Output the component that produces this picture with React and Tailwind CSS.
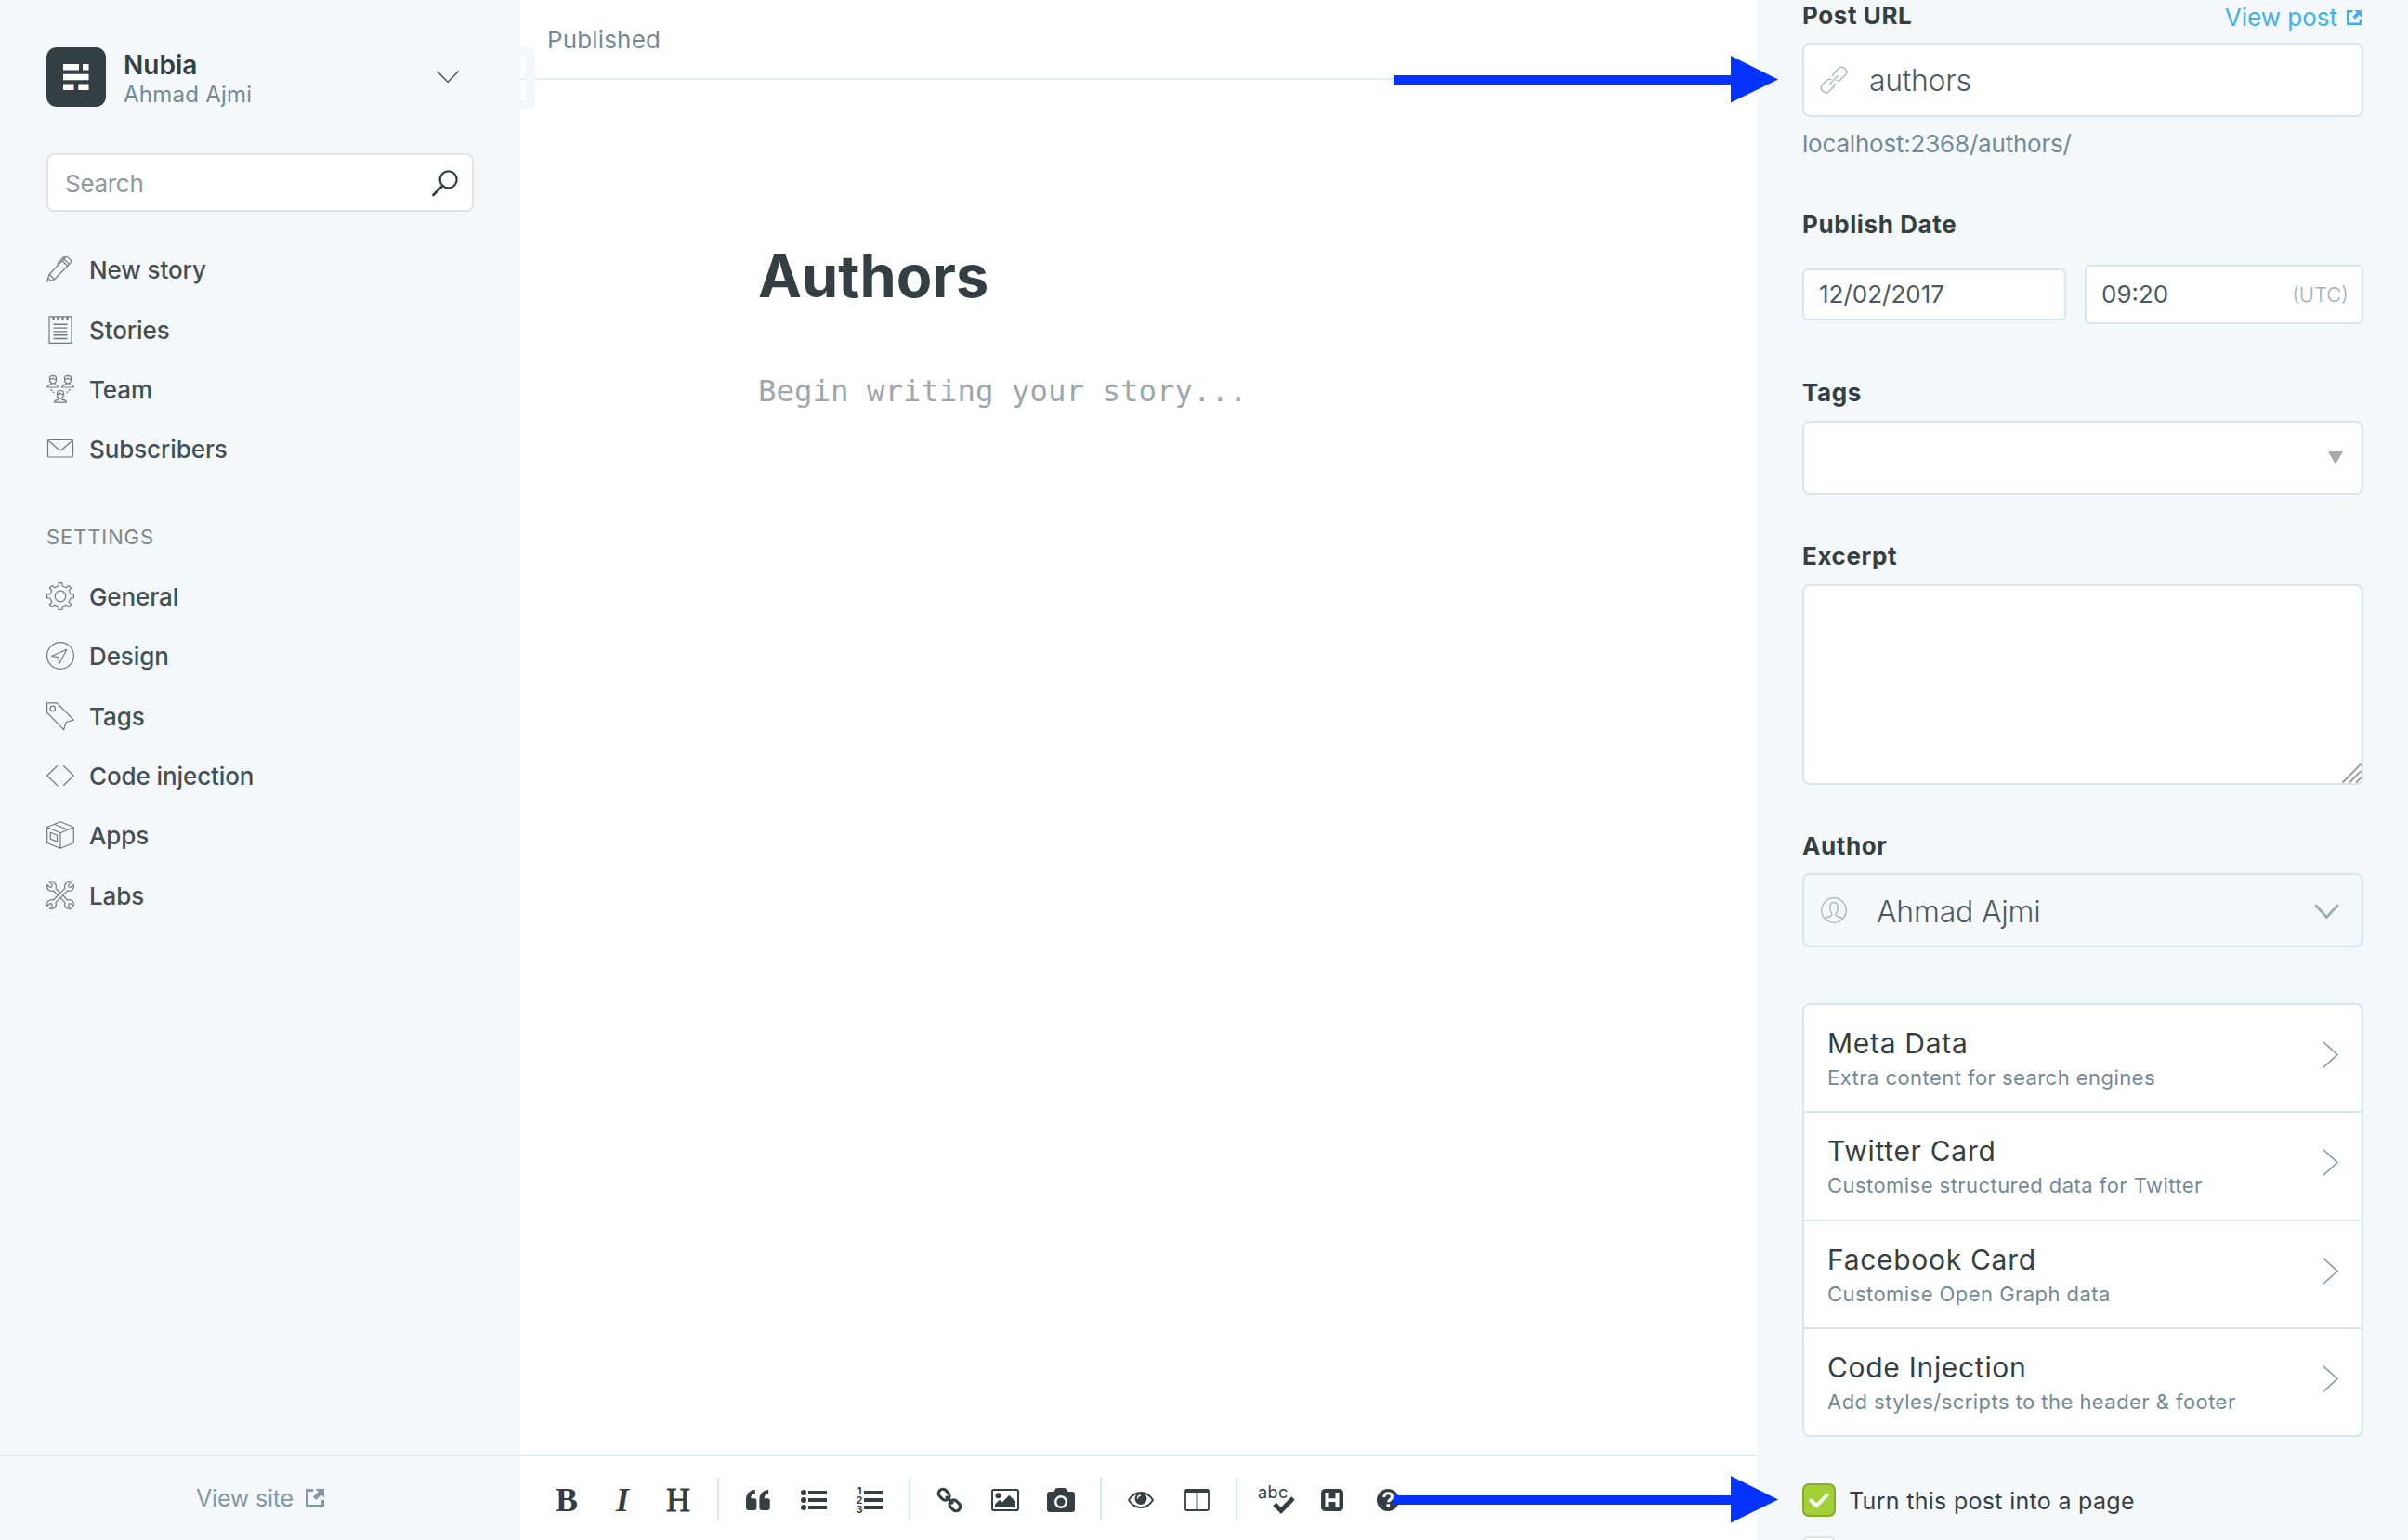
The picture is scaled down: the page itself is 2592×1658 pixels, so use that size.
import React from "react";

const Svg = ({ w = 30, h = 30, vb, className = "", children, sw = 1.2, stroke = "currentColor", fill = "none" }) => (
  <svg width={w} height={h} viewBox={vb || `0 0 ${w} ${h}`} fill={fill} stroke={stroke} strokeWidth={sw} className={"shrink-0 overflow-visible " + className}>
    {children}
  </svg>
);

/* ---------- sidebar icons ---------- */

const PenIcon = () => (
  <Svg>
    <path d="M.6 28.2 3 20.3 18.8 3.9l5.7 5.5L8.6 25.7z" />
    <path d="M3 20.3l5.6 5.4M2 24.4l2.4 2.4M16.9 5.8l5.7 5.5M18.8 3.9l2-2q1-.9 2.2 0l3.2 3.2q1 1.2 0 2.2l-1.7 2.1M20.3 2.4 18.7 1.6 11.5 9.4" />
  </Svg>
);
const NotebookIcon = () => (
  <Svg>
    <path d="M3 .8h24v28.6H3z" />
    <path d="M7.5 1v3.4M12.5 1v3.4M17.5 1v3.4M22.5 1v3.4" strokeWidth="2.2" />
    <path d="M7.5 9.3h15M7.5 13.1h15M7.5 16.9h15M7.5 20.7h15M7.5 24.5h15" strokeWidth="1.4" />
  </Svg>
);
const Bust = ({ x, y }) => (
  <g transform={`translate(${x} ${y})`}>
    <path d="M-3.6 3.6c0-2 1.4-3.1 3.6-3.1s3.6 1.1 3.6 3.1c0 3-1.3 5.4-3.6 5.4S-3.6 6.6-3.6 3.6z" />
    <path d="M-3.6 4.2q2.2.6 3.6-.9q1.4 1.5 3.6.9M-1.8 8.5v1.7q-4.6.7-4.6 3H6.4q0-2.3-4.6-3V8.5" />
  </g>
);
const TeamIcon = () => (
  <Svg>
    <Bust x={7} y={-0.2} />
    <Bust x={23} y={-0.2} />
    <Bust x={15} y={16} />
    <path d="M4.5 15l3.8 4.2M25.5 15l-3.8 4.2" strokeDasharray="2.6 1" />
  </Svg>
);
const MailIcon = () => (
  <Svg>
    <rect x="1.5" y="5.5" width="27" height="18.5" rx="1.5" />
    <path d="M2 6.2l11.6 10q1.4 1.1 2.8 0L28 6.2" />
  </Svg>
);
const gearPath = (() => {
  const pts = [];
  for (let k = 0; k < 8; k++) {
    const a = (k * Math.PI) / 4;
    [[-4, 10.2], [-2, 11], [-2, 14.4], [2, 14.4], [2, 11], [4, 10.2]].forEach(([t, r]) => {
      pts.push(`${(15 + r * Math.cos(a) - t * Math.sin(a)).toFixed(2)} ${(15 + r * Math.sin(a) + t * Math.cos(a)).toFixed(2)}`);
    });
  }
  return "M" + pts.join("L") + "Z";
})();
const GearIcon = () => (
  <Svg>
    <path d={gearPath} strokeLinejoin="round" />
    <circle cx="15" cy="15" r="5.8" />
  </Svg>
);
const DesignIcon = () => (
  <Svg>
    <circle cx="15" cy="15" r="14.4" />
    <path d="M21.8 8.3 5.6 15.5l7.3 1.2.7 7.3z" strokeLinejoin="round" />
  </Svg>
);
const TagIcon = () => (
  <Svg>
    <path d="M.6.8h10.6l18.2 18.3-8.3 2.3-2.5 8.2L.6 11.2z" />
    <circle cx="6.8" cy="6.9" r="2.7" />
  </Svg>
);
const CodeIcon = () => (
  <Svg>
    <path d="M11.8 4.2.8 15l11 10.8M18.2 4.2 29.2 15l-11 10.8" />
  </Svg>
);
const BoxIcon = () => (
  <Svg>
    <path d="M15 .7l14.3 5.8v17L15 29.3.7 23.5v-17zM.7 6.5 15 12.7l14.3-6.2M15 12.7v16.6M8.6 3.3l14.2 6M4.3 12.3l7.2 3v6.8l-7.2-3z" strokeLinejoin="round" />
  </Svg>
);
const wrench =
  "M2 9.6V-9.6A5.3 5.3 0 0 0 1.9-19.4V-15.3L0-13.8L-1.9-15.3V-19.4A5.3 5.3 0 0 0-2-9.6V9.6A5.3 5.3 0 0 0-1.9 19.4V15.3L0 13.8L1.9 15.3V19.4A5.3 5.3 0 0 0 2 9.6Z";
const LabsIcon = () => (
  <Svg>
    <g transform="translate(15 15) scale(.93)">
      <path d={wrench} transform="rotate(-45)" />
      <path d={wrench} transform="rotate(45)" fill="#f4f8fb" />
    </g>
  </Svg>
);

/* ---------- shared icons ---------- */

const ExternalIcon = ({ size, className }) => (
  <Svg w={size} h={size} vb="0 0 20 20" sw={0} fill="currentColor" className={className}>
    <path d="M0 0h8v3H3v14h14v-5h3v8H0zM10.5 0H20v9.5l-3.2-3.2-5.6 5.8-3.3-3.3 5.7-5.7z" />
  </Svg>
);

/* ---------- toolbar icons ---------- */

const QuoteIcon = () => (
  <Svg w={26} h={22} sw={0} fill="currentColor">
    <path d="M9.8 0v4C7 4.4 5.4 6 5.2 9.2H9q2.4 0 2.4 2.4v8Q11.4 22 9 22H2.4Q0 22 0 19.6V11C0 4.5 3.5.3 9.8 0zM24.2 0v4c-2.8.4-4.4 2-4.6 5.2h3.8q2.4 0 2.4 2.4v8q0 2.4-2.4 2.4h-6.6q-2.4 0-2.4-2.4V11C14.4 4.5 17.9.3 24.2 0z" />
  </Svg>
);
const ListIcon = () => (
  <Svg w={28} h={22} sw={0} fill="currentColor">
    <circle cx="3" cy="3" r="3" />
    <circle cx="3" cy="11" r="3" />
    <circle cx="3" cy="19" r="3" />
    <path d="M8 1h20v4H8zM8 9h20v4H8zM8 17h20v4H8z" />
  </Svg>
);
const OrderedIcon = () => (
  <div className="flex items-center gap-[2px]">
    <div className="flex w-[6px] flex-col items-center text-[11px] font-bold leading-[10px]">
      <span>1</span>
      <span>2</span>
      <span>3</span>
    </div>
    <Svg w={20} h={22} sw={0} fill="currentColor">
      <path d="M0 1h20v4H0zM0 9h20v4H0zM0 17h20v4H0z" />
    </Svg>
  </div>
);
const ChainIcon = () => (
  <Svg w={26} h={26} sw={3.2}>
    <g transform="rotate(45 13 13)">
      <rect x="-1.6" y="8.5" width="12.6" height="9" rx="4.2" />
      <rect x="15" y="8.5" width="12.6" height="9" rx="4.2" />
      <path d="M7.5 13h11" />
    </g>
  </Svg>
);
const ImageIcon = () => (
  <Svg w={30} h={24} sw={2}>
    <rect x="1" y="1" width="28" height="22" rx="1.8" />
    <g fill="currentColor" stroke="none">
      <circle cx="7.5" cy="7.2" r="3" />
      <path d="M4 20v-3.6l5-4.6 2.7 2.6 7.6-7.6 6.7 6.8V20z" />
    </g>
  </Svg>
);
const CameraIcon = () => (
  <Svg w={30} h={26} sw={0} fill="currentColor">
    <path fillRule="evenodd" d="M8.5 2Q9.300 0 11.300 0h7.400q2 0 2.800 2l.9 2H27q3 0 3 3v16q0 3-3 3H3q-3 0-3-3V7q0-3 3-3h4.600zM15 8a7 7 0 1 0 0 14 7 7 0 0 0 0-14z" />
    <circle cx="15" cy="15" r="4.5" />
  </Svg>
);
const EyeIcon = () => (
  <Svg w={28} h={18} sw={1.8}>
    <path d="M1 9Q6 1 14 1t13 8q-5 8-13 8T1 9z" />
    <circle cx="14" cy="7.5" r="6.5" fill="currentColor" stroke="none" />
    <path d="M10.5 7.5q0-3.3 3.5-3.5" stroke="#fff" strokeWidth="1.3" />
  </Svg>
);
const ColumnsIcon = () => (
  <Svg w={27} h={24} sw={1.8}>
    <rect x="1" y="1" width="25" height="22" rx="1.5" />
    <path d="M13.5 2v21" />
    <path d="M1 2.2h25" strokeWidth="3.6" />
  </Svg>
);
const SpellIcon = () => (
  <div className="relative h-[30px] w-[40px]">
    <span className="absolute -top-[3px] left-0 text-[18px] leading-[20px] tracking-[0.4px]">abc</span>
    <Svg w={24} h={19} sw={5} className="absolute left-[16px] top-[11px]">
      <path d="M2 8.5l7 7L22 2" />
    </Svg>
  </div>
);
const HBoxIcon = () => (
  <Svg w={24} h={24} sw={0} fill="currentColor">
    <rect width="24" height="24" rx="4.5" />
    <path d="M4.500 4h4v6.200h7V4h4v16h-4v-6h-7v6h-4z" fill="#fff" />
  </Svg>
);
const HelpIcon = () => (
  <Svg w={24} h={24} sw={0} fill="currentColor">
    <circle cx="12" cy="12" r="12" />
    <path d="M7.8 9q.2-4.300 4.400-4.300t4.300 3.600q0 2-2.200 3.300-1.700 1-1.700 2.700" stroke="#fff" strokeWidth="3" fill="none" />
    <path d="M10.5 16.300h3.600v3.500h-3.600z" fill="#fff" />
  </Svg>
);

const Tool = ({ children }) => <div className="flex h-[60px] w-[60px] items-center justify-center">{children}</div>;
const Rule = () => <div className="mx-[12px] -mt-[2px] h-[46px] w-[2px] bg-[#d9e7f1]" />;

const Toolbar = () => (
  <div className="flex h-[92px] items-center border-t-2 border-[#e3ecf3] pl-[20px] pt-[4px] text-[#343f44]">
    <Tool><span className="font-['Liberation_Serif',serif] text-[36px] font-bold leading-[40px]">B</span></Tool>
    <Tool><span className="font-['Liberation_Serif',serif] text-[36px] font-bold italic leading-[40px]">I</span></Tool>
    <Tool><span className="font-['Liberation_Serif',serif] text-[36px] leading-[40px] [-webkit-text-stroke:0.8px_#343f44]">H</span></Tool>
    <Rule />
    <Tool><QuoteIcon /></Tool>
    <Tool><ListIcon /></Tool>
    <Tool><OrderedIcon /></Tool>
    <Rule />
    <Tool><ChainIcon /></Tool>
    <Tool><ImageIcon /></Tool>
    <Tool><CameraIcon /></Tool>
    <Rule />
    <Tool><EyeIcon /></Tool>
    <Tool><ColumnsIcon /></Tool>
    <Rule />
    <Tool><SpellIcon /></Tool>
    <Tool><HBoxIcon /></Tool>
    <Tool><HelpIcon /></Tool>
  </div>
);

/* ---------- sidebar ---------- */

const NavItem = ({ icon: Icon, label }) => (
  <li className="flex h-[64.4px] items-center gap-[16px] text-[26px] leading-[32px] text-[#434f52]">
    <span className="text-[#72797c]"><Icon /></span>
    <span className="pt-[2px] font-[450] tracking-[-0.1px]">{label}</span>
  </li>
);

const Sidebar = () => (
  <aside className="flex w-[560px] shrink-0 flex-col bg-[#f4f8fb] px-[50px] pt-[51px]">
    <div className="flex h-[64px] items-start">
      <Svg w={64} h={64} sw={0} fill="#fff">
        <rect width="64" height="64" rx="11" fill="#343f44" />
        <path d="M18 18h17v6.5H18zM39 18h6.5v6.5H39zM18 28.7h27.5v6.5H18zM18 39.5h11.5V46H18zM34.3 39.5h11.2V46H34.3z" />
      </Svg>
      <div className="ml-[19px] flex grow flex-col gap-[1px] pt-[3px]">
        <span className="text-[28px] font-semibold leading-[32px] text-[#343f44]">Nubia</span>
        <span className="text-[24px] leading-[30px] tracking-[0.25px] text-[#738a94]">Ahmad Ajmi</span>
      </div>
      <Svg w={24} h={14} className="mr-[16px] mt-[25px] text-[#343f44]" sw={1.2}>
        <path d="M.5.5 12 12.5 23.5.5" />
      </Svg>
    </div>
    <div className="mt-[50px] flex h-[63px] items-center justify-between rounded-[8px] border-2 border-[#dfe3e6] bg-white pl-[18px] pr-[15px]">
      <span className="pt-[2px] text-[26px] leading-[32px] tracking-[-0.3px] text-[#8e989b]">Search</span>
      <Svg w={28} h={28} sw={2.3} className="text-[#343f44]">
        <circle cx="17.6" cy="10.4" r="9" />
        <path d="M11.3 17 1.3 27" strokeLinecap="round" strokeWidth="2.6" />
      </Svg>
    </div>
    <ul className="mt-[30px]">
      <NavItem icon={PenIcon} label="New story" />
      <NavItem icon={NotebookIcon} label="Stories" />
      <NavItem icon={TeamIcon} label="Team" />
      <NavItem icon={MailIcon} label="Subscribers" />
    </ul>
    <h4 className="mt-[47px] text-[22px] leading-[30px] tracking-[0.9px] text-[#808587]">SETTINGS</h4>
    <ul className="mt-[17px]">
      <NavItem icon={GearIcon} label="General" />
      <NavItem icon={DesignIcon} label="Design" />
      <NavItem icon={TagIcon} label="Tags" />
      <NavItem icon={CodeIcon} label="Code injection" />
      <NavItem icon={BoxIcon} label="Apps" />
      <NavItem icon={LabsIcon} label="Labs" />
    </ul>
    <div className="-mx-[50px] mt-auto flex h-[92px] items-center justify-center gap-[13px] border-t-2 border-[#e3ecf3] text-[25px] leading-[32px] text-[#839aa3]">
      <span className="tracking-[-0.2px]">View site</span>
      <ExternalIcon size={20} />
    </div>
  </aside>
);

/* ---------- editor ---------- */

const Editor = () => (
  <main className="relative flex w-[1332px] shrink-0 flex-col bg-white">
    <div className="flex h-[86px] items-center border-b-2 border-[#e3edf4] pl-[29px] pt-[2px] text-[26px] leading-[32px] text-[#738a94]">
      <span className="tracking-[0.15px]">Published</span>
    </div>
    <div className="absolute left-0 top-[50px] h-[68px] w-[16px] rounded-r-[8px] border-y-[10px] border-r-[10px] border-[#f4f8fb]" />
    <div className="flex grow flex-col pl-[256px] pt-[171px]">
      <h1 className="text-[63px] font-bold leading-[80px] text-[#343f44]">Authors</h1>
      <p className="mt-[64px] font-['DejaVu_Sans_Mono',monospace] text-[32.4px] leading-[40px] text-[#9ea7ab]">Begin writing your story...</p>
    </div>
    <Toolbar />
  </main>
);

/* ---------- settings panel ---------- */

const Label = ({ children, className = "" }) => (
  <div className={"text-[26px] font-bold leading-[32px] tracking-[0.6px] text-[#343f44] " + className}>{children}</div>
);

const Card = ({ title, text, last }) => (
  <div className={"flex justify-between px-[25px] " + (last ? "h-[114.3px]" : "h-[116.4px] border-b-2 border-[#d7e5ec]")}>
    <div className="flex flex-col">
      <span className="mt-[23px] text-[30px] leading-[36px] tracking-[0.7px] text-[#343f44]">{title}</span>
      <span className="mt-[5px] text-[22px] leading-[28px] tracking-[0.45px] text-[#738a94]">{text}</span>
    </div>
    <Svg w={17} h={29} sw={1.5} className="mt-[39px] text-[#82959e]">
      <path d="M.8.8 16 14.5.8 28.2" />
    </Svg>
  </div>
);

const Panel = () => (
  <aside className="flex w-[700px] shrink-0 flex-col bg-[#f4f8fb] px-[48px] [&>*]:shrink-0">
    <div className="flex h-[46px] items-start justify-between">
      <Label className="pt-[1px]">Post URL</Label>
      <div className="flex items-center gap-[10px] pr-[2px] pt-[3px] text-[26px] leading-[32px] text-[#3eb0ef]">
        <span>View post</span>
        <ExternalIcon size={16} />
      </div>
    </div>
    <div className="flex h-[80px] items-center rounded-[8px] border-2 border-[#d7e5ec] bg-white pl-[18px] text-[#4a5a60]">
      <Svg w={28} h={28} sw={1.3} className="text-[#a3b1b8]">
        <g transform="rotate(-45 14 14)">
          <path d="M12 17.5q-1.300 1.500-3.300 1.500H1q-4-.3-4-5t4-5h7.700q3 .2 3.600 3" />
          <path d="M16 10.500Q17.300 9 19.300 9H27q4 .3 4 5t-4 5h-7.700q-3-.2-3.600-3" />
          <path d="M7.500 14h13" />
        </g>
      </Svg>
      <span className="ml-[24px] pt-[1px] text-[32px] font-light leading-[40px] tracking-[-0.3px]">authors</span>
    </div>
    <div className="mt-[13px] text-[26px] leading-[32px] tracking-[-0.2px] text-[#738a94]">localhost:2368/authors/</div>
    <Label className="mt-[55px]">Publish Date</Label>
    <div className="mt-[27px] flex h-[64px] items-center justify-between text-[26px] leading-[32px] text-[#4a5a60]">
      <div className="flex h-[56px] w-[284px] items-center rounded-[6px] border-2 border-[#d7e5ec] bg-white pl-[16px]">12/02/2017</div>
      <div className="flex h-[64px] w-[300px] items-center justify-between rounded-[6px] border-2 border-[#d7e5ec] bg-white pl-[16px] pr-[14px]">
        <span>09:20</span>
        <span className="text-[22px] font-light text-[#9fb0b8]">(UTC)</span>
      </div>
    </div>
    <Label className="mt-[58px]">Tags</Label>
    <div className="mt-[14px] flex h-[80px] items-center justify-end rounded-[8px] border-2 border-[#d7e5ec] bg-white pr-[20px]">
      <Svg w={16} h={14} sw={0} fill="#aaa"><path d="M0 0h16L8 14z" /></Svg>
    </div>
    <Label className="mt-[50px]">Excerpt</Label>
    <div className="mt-[14px] flex h-[216px] items-end justify-end rounded-[8px] border-2 border-[#d7e5ec] bg-white">
      <Svg w={21} h={21} sw={1.8} className="text-[#999]"><path d="M.5 20.5 20.5.5M8 20.5 20.5 8M15 20.5 20.5 15" /></Svg>
    </div>
    <Label className="mt-[50px]">Author</Label>
    <div className="mt-[13px] flex h-[80px] items-center rounded-[8px] border-2 border-[#d7e5ec] pl-[18px] pr-[25px] text-[#4a5a60]">
      <Svg w={28} h={28} sw={1.3} className="text-[#a3b1b8]">
        <circle cx="14" cy="14" r="13.3" />
        <path d="M4.6 23.4q1.200-1.700 4-2.400 3.200-.8 3.400-1.800.1-1.500-.8-2.900-1.600-2-1.600-6 .2-4.500 4.400-4.600t4.400 4.600q0 4-1.600 6-.9 1.400-.8 2.900.2 1 3.400 1.800 2.800.7 4 2.400" />
      </Svg>
      <span className="ml-[32px] grow pt-[4px] text-[32px] font-light leading-[40px] tracking-[-0.2px]">Ahmad Ajmi</span>
      <Svg w={25} h={15} sw={2.8} className="mt-[3px] text-[#9aabb3]"><path d="M1 1l11.500 12.500L24 1" strokeLinecap="round" /></Svg>
    </div>
    <div className="mt-[60px] rounded-[8px] border-2 border-[#d7e5ec] bg-white">
      <Card title="Meta Data" text="Extra content for search engines" />
      <Card title="Twitter Card" text="Customise structured data for Twitter" />
      <Card title="Facebook Card" text="Customise Open Graph data" />
      <Card title="Code Injection" text="Add styles/scripts to the header & footer" last />
    </div>
    <div className="mt-[49.5px] flex h-[36px] items-center gap-[14px]">
      <div className="flex h-[36px] w-[36px] items-center justify-center rounded-[7px] border-2 border-[#86ab2a] bg-[#a4d037]">
        <Svg w={22} h={16} sw={3.8} className="text-white"><path d="M1.3 7.5l7 6.500L20.700 1.500" /></Svg>
      </div>
      <span className="pt-[2px] text-[25px] leading-[32px] tracking-[0.3px] text-[#343f44]">Turn this post into a page</span>
    </div>
    <div className="mt-[21px] h-[36px] w-[36px] rounded-[7px] border-2 border-[#d7e5ec] bg-white" />
  </aside>
);

const Arrow = ({ className }) => (
  <Svg w={414} h={51} sw={0} fill="#0433ff" className={"absolute left-[1500px] " + className}>
    <path d="M0 21h363V0l51 25.500-51 25V31H0z" />
  </Svg>
);

export default function App() {
  return (
    <div className="relative flex h-[1658px] w-[2592px] overflow-hidden bg-white font-[Inter,sans-serif]">
      <Sidebar />
      <Editor />
      <Panel />
      <Arrow className="top-[60px]" />
      <Arrow className="top-[1589px]" />
    </div>
  );
}
